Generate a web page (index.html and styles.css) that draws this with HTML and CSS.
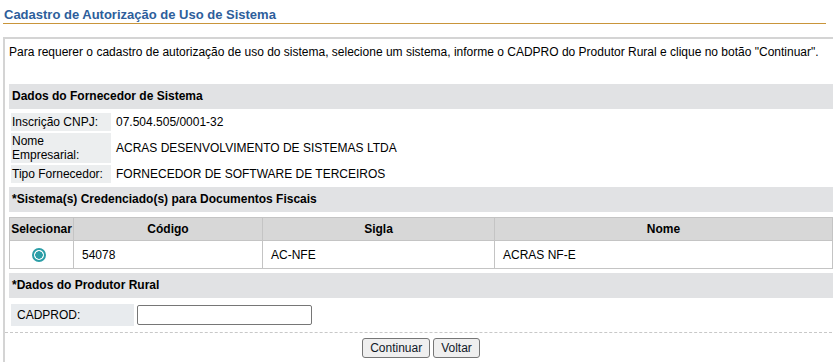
FILE: index.html
```html
<!DOCTYPE html>
<html lang="pt-BR">

<head>
    <meta charset="UTF-8">
    <title>Cadastro de Autorização de Uso de Sistema</title>
    <link rel="stylesheet" href="styles.css">
</head>

<body>

    <h1 class="titulo">Cadastro de Autorização de Uso de Sistema</h1>

    <div class="quadro">
        <p class="instrucao">Para requerer o cadastro de autorização de uso do sistema, selecione um sistema, informe o CADPRO do Produtor Rural e clique no botão "Continuar".</p>

        <!-- Fornecedor -->
        <div class="secao">Dados do Fornecedor de Sistema</div>
        <div class="dados">
            <div class="rotulo">Inscrição CNPJ:</div>
            <div class="valor">07.504.505/0001-32</div>
            <div class="rotulo">Nome<br>Empresarial:</div>
            <div class="valor">ACRAS DESENVOLVIMENTO DE SISTEMAS LTDA</div>
            <div class="rotulo">Tipo Fornecedor:</div>
            <div class="valor">FORNECEDOR DE SOFTWARE DE TERCEIROS</div>
        </div>

        <!-- Sistemas -->
        <div class="secao">*Sistema(s) Credenciado(s) para Documentos Fiscais</div>
        <table class="sistemas">
            <thead>
                <tr>
                    <th class="col-sel">Selecionar</th>
                    <th class="col-cod">Código</th>
                    <th class="col-sigla">Sigla</th>
                    <th>Nome</th>
                </tr>
            </thead>
            <tbody>
                <tr>
                    <td class="cel-radio"><span class="radio"></span></td>
                    <td>54078</td>
                    <td>AC-NFE</td>
                    <td>ACRAS NF-E</td>
                </tr>
            </tbody>
        </table>

        <!-- Produtor -->
        <div class="secao">*Dados do Produtor Rural</div>
        <div class="produtor">
            <div class="rotulo-produtor">CADPROD:</div>
            <input type="text" class="campo">
        </div>

        <div class="acoes">
            <button class="botao">Continuar</button>
            <button class="botao">Voltar</button>
        </div>
    </div>

</body>

</html>
```

FILE: styles.css
```css
/* Cadastro de autorizacao */
body {
    font-family: 'Liberation Sans', Arial, sans-serif;
    font-size: 12px;
    line-height: 14px;
    color: #000000;
    background-color: #ffffff;
    margin: 0;
    padding: 0;
    overflow: hidden;
}

.titulo {
    font-size: 13px;
    line-height: 15px;
    font-weight: bold;
    color: #2d5e9b;
    margin: 0 7px 0 3px;
    padding: 7px 0 1px 1px;
    border-bottom: 1px solid #c9953a;
}

.quadro {
    margin: 13px -6px 0 3px;
    padding: 6px 4px 0 4px;
    border-top: 2px solid #d4d4d4;
    border-left: 2px solid #d4d4d4;
    border-right: 2px solid #d4d4d4;
}

.instrucao {
    margin: 0 0 25px 0;
}

.secao {
    background-color: #e1e2e4;
    height: 25px;
    line-height: 25px;
    padding-left: 3px;
    font-weight: bold;
}

.dados {
    display: grid;
    grid-template-columns: 100px 1fr;
    gap: 2px;
    padding: 4px 0 4px 2px;
}

.rotulo {
    background-color: #eceeef;
    min-height: 18px;
    padding: 1px;
    box-sizing: border-box;
    display: flex;
    align-items: center;
}

.valor {
    min-height: 18px;
    padding-left: 3px;
    display: flex;
    align-items: center;
}

.sistemas {
    width: 100%;
    margin: 5px 0 4px 0;
    border-collapse: collapse;
    font-size: 12px;
}

.sistemas th,
.sistemas td {
    border: 1px solid #c4c4c4;
    padding: 0 8px;
}

.sistemas th {
    background-color: #d7d7d7;
    height: 22px;
    font-weight: bold;
    text-align: center;
}

.sistemas td {
    height: 27px;
    text-align: left;
}

.sistemas .col-sel {
    width: 63px;
    padding: 0;
}

.sistemas .col-cod {
    width: 172px;
}

.sistemas .col-sigla {
    width: 215px;
}

.sistemas .cel-radio {
    text-align: center;
    padding: 0 6px 0 0;
}

.radio {
    display: inline-block;
    width: 10px;
    height: 10px;
    border: 2px solid #2b9ea7;
    border-radius: 50%;
    background: radial-gradient(circle, #2b9ea7 0 3.5px, #ffffff 4px);
    vertical-align: middle;
}

.produtor {
    display: flex;
    align-items: center;
    gap: 3px;
    padding: 6px 0 6px 2px;
}

.rotulo-produtor {
    background-color: #e8ebee;
    width: 117px;
    height: 22px;
    line-height: 22px;
    padding-left: 6px;
}

.campo {
    width: 175px;
    height: 20px;
    box-sizing: border-box;
    border: 1px solid #767676;
    border-radius: 2px;
    padding: 0 3px;
    font-family: inherit;
    font-size: 12px;
    margin: 0;
}

.acoes {
    display: flex;
    justify-content: center;
    gap: 3px;
    border-top: 1px dashed #c8c8c8;
    margin: 0 -4px;
    padding: 5px 0 0 0;
    height: 40px;
}

.botao {
    font-family: inherit;
    font-size: 12px;
    height: 20px;
    padding: 0 7px;
    background-color: #efefef;
    border: 1px solid #767676;
    border-radius: 3px;
    color: #101828;
    cursor: pointer;
}

.botao:hover {
    background-color: #e5e5e5;
}
```
